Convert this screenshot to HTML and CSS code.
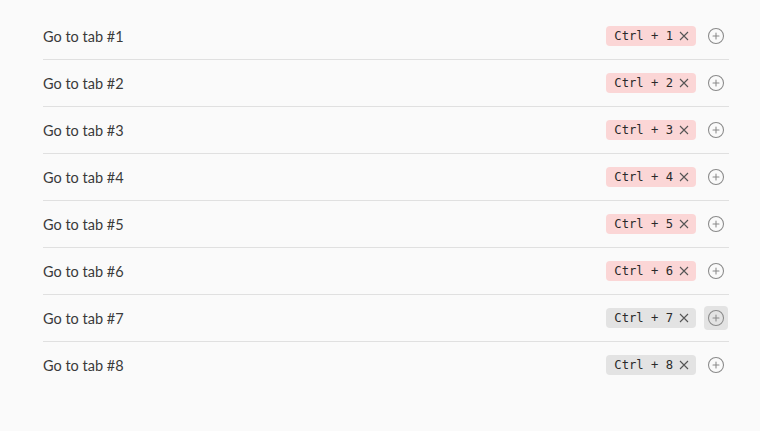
FILE: index.html
```html
<!DOCTYPE html>
<html>
<head>
<meta charset="utf-8">
<link rel="stylesheet" href="styles.css">
</head>
<body>
<div class="list">
  <div class="row"><div class="name">Go to tab #1</div><div class="controls"><span class="hotkey conflict"><span class="keys">Ctrl + 1</span><svg class="x" viewBox="0 0 10 10"><path d="M1 1L9 9M9 1L1 9"/></svg></span><span class="add"><svg viewBox="0 0 24 24"><circle cx="12" cy="12" r="10"/><path d="M12 8v8M8 12h8"/></svg></span></div></div>
  <div class="row"><div class="name">Go to tab #2</div><div class="controls"><span class="hotkey conflict"><span class="keys">Ctrl + 2</span><svg class="x" viewBox="0 0 10 10"><path d="M1 1L9 9M9 1L1 9"/></svg></span><span class="add"><svg viewBox="0 0 24 24"><circle cx="12" cy="12" r="10"/><path d="M12 8v8M8 12h8"/></svg></span></div></div>
  <div class="row"><div class="name">Go to tab #3</div><div class="controls"><span class="hotkey conflict"><span class="keys">Ctrl + 3</span><svg class="x" viewBox="0 0 10 10"><path d="M1 1L9 9M9 1L1 9"/></svg></span><span class="add"><svg viewBox="0 0 24 24"><circle cx="12" cy="12" r="10"/><path d="M12 8v8M8 12h8"/></svg></span></div></div>
  <div class="row"><div class="name">Go to tab #4</div><div class="controls"><span class="hotkey conflict"><span class="keys">Ctrl + 4</span><svg class="x" viewBox="0 0 10 10"><path d="M1 1L9 9M9 1L1 9"/></svg></span><span class="add"><svg viewBox="0 0 24 24"><circle cx="12" cy="12" r="10"/><path d="M12 8v8M8 12h8"/></svg></span></div></div>
  <div class="row"><div class="name">Go to tab #5</div><div class="controls"><span class="hotkey conflict"><span class="keys">Ctrl + 5</span><svg class="x" viewBox="0 0 10 10"><path d="M1 1L9 9M9 1L1 9"/></svg></span><span class="add"><svg viewBox="0 0 24 24"><circle cx="12" cy="12" r="10"/><path d="M12 8v8M8 12h8"/></svg></span></div></div>
  <div class="row"><div class="name">Go to tab #6</div><div class="controls"><span class="hotkey conflict"><span class="keys">Ctrl + 6</span><svg class="x" viewBox="0 0 10 10"><path d="M1 1L9 9M9 1L1 9"/></svg></span><span class="add"><svg viewBox="0 0 24 24"><circle cx="12" cy="12" r="10"/><path d="M12 8v8M8 12h8"/></svg></span></div></div>
  <div class="row"><div class="name">Go to tab #7</div><div class="controls"><span class="hotkey"><span class="keys">Ctrl + 7</span><svg class="x" viewBox="0 0 10 10"><path d="M1 1L9 9M9 1L1 9"/></svg></span><span class="add hover"><svg viewBox="0 0 24 24"><circle cx="12" cy="12" r="10"/><path d="M12 8v8M8 12h8"/></svg></span></div></div>
  <div class="row"><div class="name">Go to tab #8</div><div class="controls"><span class="hotkey"><span class="keys">Ctrl + 8</span><svg class="x" viewBox="0 0 10 10"><path d="M1 1L9 9M9 1L1 9"/></svg></span><span class="add"><svg viewBox="0 0 24 24"><circle cx="12" cy="12" r="10"/><path d="M12 8v8M8 12h8"/></svg></span></div></div>
</div>
</body>
</html>
```
FILE: styles.css
```css
html, body {
  margin: 0;
  padding: 0;
  background: #fafafa;
}
body {
  font-family: Lato, "Noto Sans", sans-serif;
  color: #3a3a3a;
}
.list {
  padding: 13px 31px 0 43px;
}
.row {
  display: flex;
  align-items: center;
  justify-content: space-between;
  height: 46px;
  border-top: 1px solid #e0e0e0;
}
.row:first-child {
  border-top: none;
}
.name {
  font-size: 14.5px;
}
.controls {
  display: flex;
  align-items: center;
  gap: 8px;
  margin-right: 1px;
}
.hotkey {
  display: flex;
  align-items: center;
  gap: 6px;
  height: 20px;
  padding: 0 7px 0 8px;
  border-radius: 4px;
  background: #e3e3e3;
  font-family: "DejaVu Sans Mono", "Liberation Mono", monospace;
  font-size: 12.2px;
  color: #2a2a2a;
}
.hotkey.conflict {
  background: #fbd6d6;
}
.keys {
  white-space: pre;
}
.x {
  width: 10px;
  height: 10px;
  stroke: #555;
  stroke-width: 1.1;
  fill: none;
}
.add {
  display: flex;
  align-items: center;
  justify-content: center;
  width: 24px;
  height: 24px;
  border-radius: 4px;
}
.add.hover {
  background: #e3e3e3;
}
.add svg {
  width: 18px;
  height: 18px;
  fill: none;
  stroke: #8a8a8a;
  stroke-width: 1.4;
  stroke-linecap: round;
}
```
